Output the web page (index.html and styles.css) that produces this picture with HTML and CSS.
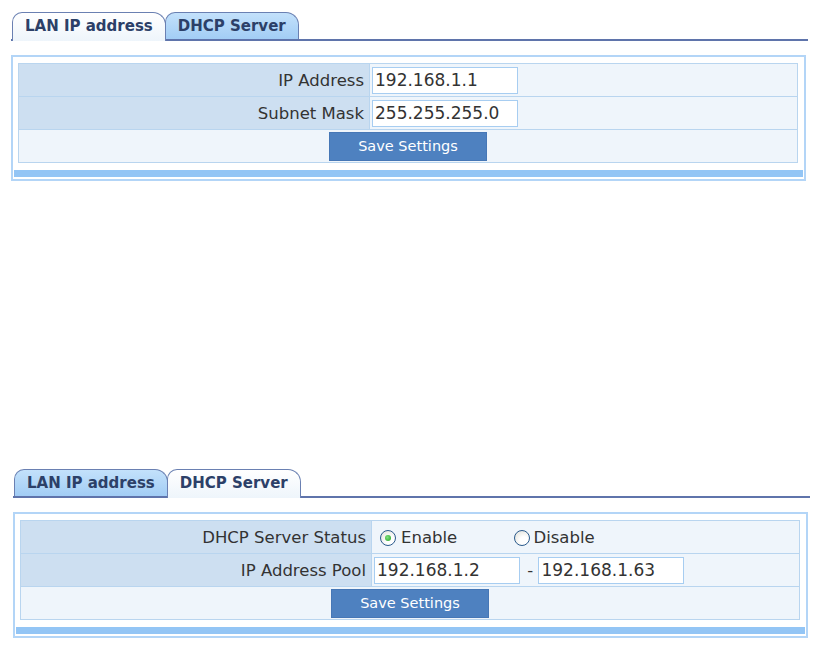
FILE: index.html
```html
<!DOCTYPE html>
<html lang="en">
<head>
    <meta charset="UTF-8">
    <title>LAN Settings</title>
    <link rel="stylesheet" href="styles.css">
</head>
<body>
    <!-- LAN IP -->
    <div class="panel panel-lan">
        <div class="tabs">
            <div class="tab active">LAN IP address</div>
            <div class="tab">DHCP Server</div>
        </div>
        <div class="box">
            <div class="box-inner">
                <table class="form-table">
                    <tr>
                        <td class="label">IP Address</td>
                        <td class="value"><input class="field" type="text" value="192.168.1.1"></td>
                    </tr>
                    <tr>
                        <td class="label">Subnet Mask</td>
                        <td class="value"><input class="field" type="text" value="255.255.255.0"></td>
                    </tr>
                    <tr>
                        <td class="actions" colspan="2"><button class="save-btn">Save Settings</button></td>
                    </tr>
                </table>
            </div>
            <div class="bar"></div>
        </div>
    </div>

    <!-- DHCP -->
    <div class="panel panel-dhcp">
        <div class="tabs">
            <div class="tab">LAN IP address</div>
            <div class="tab active">DHCP Server</div>
        </div>
        <div class="box">
            <div class="box-inner">
                <table class="form-table">
                    <tr>
                        <td class="label">DHCP Server Status</td>
                        <td class="value">
                            <label class="radio-opt"><span class="radio checked"></span>Enable</label>
                            <label class="radio-opt second"><span class="radio"></span>Disable</label>
                        </td>
                    </tr>
                    <tr>
                        <td class="label">IP Address Pool</td>
                        <td class="value">
                            <input class="field" type="text" value="192.168.1.2">
                            <span class="dash">-</span>
                            <input class="field" type="text" value="192.168.1.63">
                        </td>
                    </tr>
                    <tr>
                        <td class="actions" colspan="2"><button class="save-btn">Save Settings</button></td>
                    </tr>
                </table>
            </div>
            <div class="bar"></div>
        </div>
    </div>
</body>
</html>
```

FILE: styles.css
```css
:root {
    --tab-line: #5f74ab;
    --tab-text: #2c4068;
    --frame: #b3d5f7;
    --label-bg: #cddff1;
    --value-bg: #eff5fb;
    --grid: #b9d5ef;
    --btn: #4e81c0;
}

body {
    margin: 0;
    background: #fff;
    color: #333;
    font-family: "DejaVu Sans", Verdana, sans-serif;
    font-size: 16.5px;
}

.panel {
    width: 797px;
}

.panel-lan {
    margin: 12px 0 0 11px;
}

.panel-dhcp {
    margin: 288px 0 0 13px;
}

/* Tabs */
.tabs {
    display: flex;
    align-items: flex-end;
    height: 27px;
    border-bottom: 2px solid var(--tab-line);
    padding-left: 1px;
}

.tab {
    position: relative;
    height: 26px;
    line-height: 26px;
    padding: 0 12px;
    font-weight: bold;
    font-size: 15px;
    color: var(--tab-text);
    background: linear-gradient(#c3e1fb, #a2cdf5);
    border: 1px solid #6a80b2;
    border-bottom: none;
    border-radius: 10px 13px 0 0;
}

.tab + .tab {
    margin-left: -1px;
}

.tab.active {
    z-index: 1;
    height: 28px;
    margin-bottom: -2px;
    background: linear-gradient(#ffffff, #eef5fb);
}

/* Box */
.box {
    width: 791px;
    margin-top: 14px;
    border: 2px solid var(--frame);
    padding: 0 0 2px;
}

.box-inner {
    padding: 6px 6px 7px 5px;
}

.form-table {
    width: 100%;
    border-collapse: collapse;
    border: 1px solid var(--grid);
}

.form-table td {
    border: 1px solid var(--grid);
    padding: 0;
    height: 32px;
}

.label {
    width: 345px;
    background: var(--label-bg);
    text-align: right;
    padding-right: 5px !important;
    white-space: nowrap;
}

.value {
    background: var(--value-bg);
    padding-left: 2px !important;
    white-space: nowrap;
}

.actions {
    background: var(--value-bg);
    text-align: center;
}

.field {
    box-sizing: border-box;
    width: 146px;
    height: 27px;
    margin: 0;
    padding: 0 2px;
    border: 1px solid #a7cdf1;
    background: #fff;
    color: #333;
    font-family: inherit;
    font-size: 17px;
    vertical-align: middle;
}

.dash {
    display: inline-block;
    margin: 0 0 0 2px;
    vertical-align: middle;
}

.save-btn {
    width: 158px;
    height: 29px;
    margin: 0;
    border: 1px solid #4677b6;
    background: var(--btn);
    color: #fff;
    font-family: inherit;
    font-size: 14.5px;
    vertical-align: middle;
}

.bar {
    height: 7px;
    margin: 0 1px;
    background: #93c5f5;
}

/* Radios */
.radio-opt {
    display: inline-flex;
    align-items: center;
    vertical-align: middle;
}

.radio-opt.second {
    margin-left: 52px;
}

.radio {
    box-sizing: border-box;
    width: 16px;
    height: 16px;
    margin: 0 5px 0 6px;
    border: 1px solid #2a5a8c;
    border-radius: 50%;
    background: radial-gradient(circle at 65% 70%, #ffffff 30%, #dcdcd4 100%);
    position: relative;
}

.radio-opt.second .radio {
    margin: 0 3px 0 0;
}

.radio.checked::after {
    content: '';
    position: absolute;
    left: 4px;
    top: 4px;
    width: 6px;
    height: 6px;
    border-radius: 50%;
    background: radial-gradient(circle at 40% 40%, #7fe07f, #21a121);
}
```
